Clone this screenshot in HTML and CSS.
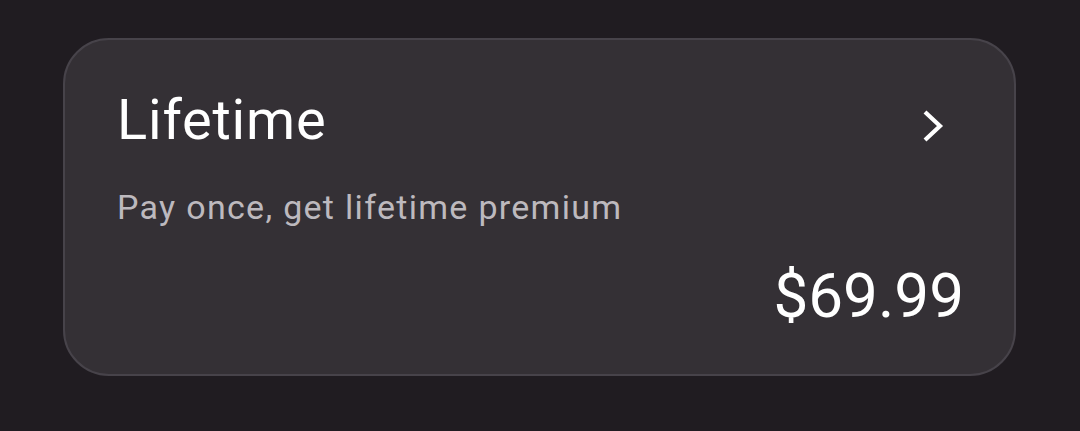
FILE: index.html
```html
<!DOCTYPE html>
<html lang="en">
<head>
    <meta charset="UTF-8">
    <meta name="viewport" content="width=device-width, initial-scale=1.0">
    <title>Lifetime plan</title>
    <link rel="stylesheet" href="styles.css">
</head>
<body>
    <div class="plan-card">
        <div class="plan-head">
            <h2 class="plan-title">Lifetime</h2>
            <svg class="chevron" width="24" height="34" viewBox="0 0 24 34" aria-hidden="true">
                <path d="M3 3 L18 17 L3 31" fill="none" stroke="#ffffff" stroke-width="4.2"/>
            </svg>
        </div>
        <p class="plan-desc">Pay once, get lifetime premium</p>
        <div class="plan-price">$69.99</div>
    </div>
</body>
</html>
```

FILE: styles.css
```css
html, body {
    margin: 0;
    background: #201c21;
}

body {
    font-family: Roboto, "Noto Sans", Arial, sans-serif;
    padding: 38px 64px 0 63px;
    height: 431px;
    box-sizing: border-box;
}

.plan-card {
    box-sizing: border-box;
    width: 953px;
    height: 338px;
    background: #343035;
    border: 2px solid #47434a;
    border-radius: 46px;
    padding: 47px 50px 0 52px;
    display: flex;
    flex-direction: column;
}

.plan-head {
    display: flex;
    justify-content: space-between;
    align-items: center;
}

.plan-title {
    margin: 0;
    font-size: 56px;
    font-weight: 400;
    line-height: 67px;
    letter-spacing: 0.8px;
    color: #ffffff;
}

.chevron {
    margin-right: 18px;
    margin-top: 11px;
}

.plan-desc {
    margin: 33px 0 0;
    font-size: 34px;
    line-height: 40px;
    letter-spacing: 1.3px;
    color: #bdb9be;
}

.plan-price {
    align-self: flex-end;
    margin-top: 32px;
    font-size: 62px;
    line-height: 74px;
    color: #ffffff;
}
```
